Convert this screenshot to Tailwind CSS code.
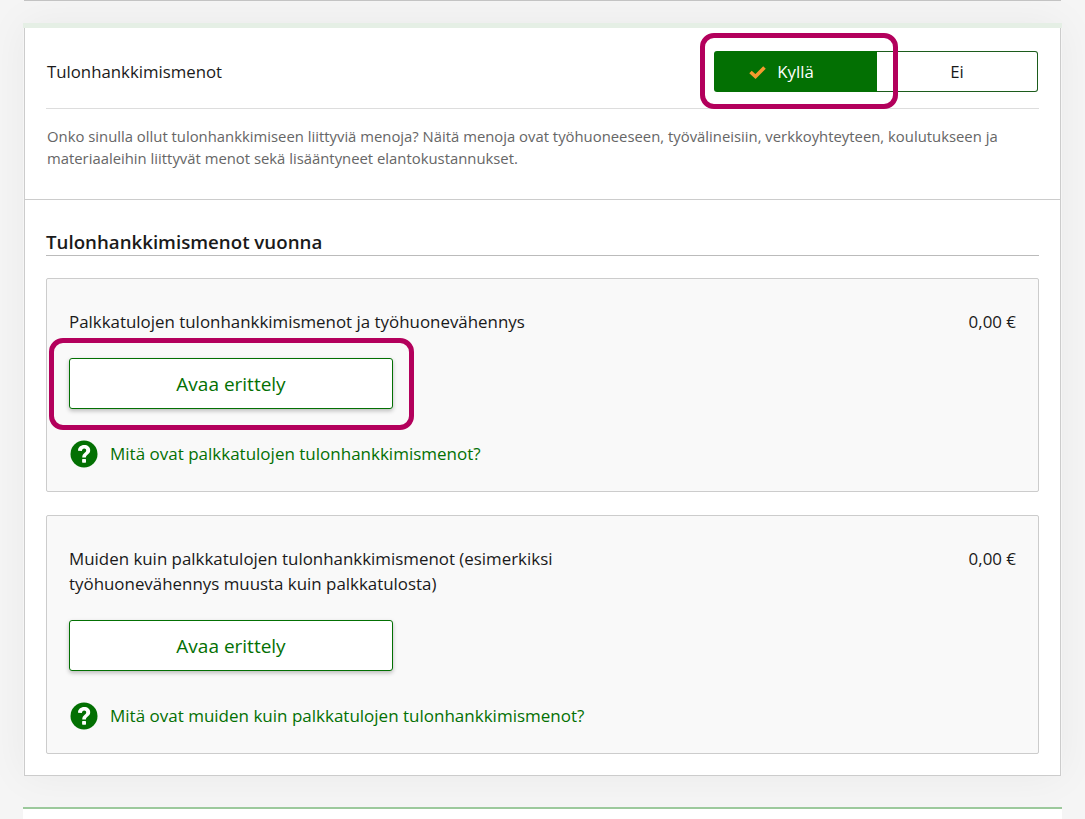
<!DOCTYPE html>
<html lang="fi">
<head>
    <meta charset="UTF-8">
    <title>Tulonhankkimismenot</title>
    <script src="https://cdn.jsdelivr.net/npm/@tailwindcss/browser@4"></script>
</head>
<body class="bg-[#f5f5f5] font-['Open_Sans',sans-serif] text-[#1a1a1a] overflow-hidden">
    <div class="relative h-[819px] w-[1085px] overflow-hidden">
        <div class="mx-[24px] h-px bg-[#c4c4c4]"></div>
        <div class="mx-[24px] h-[22px]"></div>

        <main class="mx-[23px] border-t-[5px] border-[#e5efe5] shadow-[0_0_40px_rgba(0,0,0,0.05)]">
            <div class="mx-px h-[748px] border border-t-0 border-[#cccccc] bg-white px-[21px]">
                <section class="h-[171px]">
                    <div class="flex h-[81px] items-center justify-between border-b border-[#dddddd] pt-[7px]">
                        <h2 class="ml-px text-[16.8px]">Tulonhankkimismenot</h2>
                        <div class="mr-px flex h-[41px] w-[324px] text-[16.8px]">
                            <div class="flex w-[163px] items-center justify-center gap-[11px] rounded-l-[3px] bg-[#037003] pr-[28px] text-white">
                                <svg class="h-[14px] w-[17px]" viewBox="0 0 17 14"><path d="M1.5 7l5 4.5L15.5 2.5" fill="none" stroke="#f59a2f" stroke-width="3.6"/></svg>
                                <span>Kyllä</span>
                            </div>
                            <div class="flex flex-1 items-center justify-center rounded-r-[3px] border border-l-0 border-[#1c5c1c]">Ei</div>
                        </div>
                    </div>
                    <p class="mt-[16px] ml-px text-[14.85px] leading-[22px] text-[#666666]">Onko sinulla ollut tulonhankkimiseen liittyviä menoja? Näitä menoja ovat työhuoneeseen, työvälineisiin, verkkoyhteyteen, koulutukseen ja materiaaleihin liittyvät menot sekä lisääntyneet elantokustannukset.</p>
                </section>
                <div class="-mx-[21px] h-px bg-[#cccccc]"></div>

                <section>
                    <h3 class="mt-[30px] h-[26px] border-b border-[#bbbbbb] text-[18.7px] leading-[24px] font-semibold">Tulonhankkimismenot vuonna</h3>

                    <div class="mt-[22px] h-[214px] rounded-[2px] border border-[#cccccc] bg-[#f9f9f9] px-[22px] pt-[30px]">
                        <div class="flex justify-between text-[16.9px] leading-[25px]">
                            <p>Palkkatulojen tulonhankkimismenot ja työhuonevähennys</p>
                            <span>0,00 €</span>
                        </div>
                        <button class="mt-[24px] flex h-[51px] w-[324px] items-center justify-center rounded-[3px] border border-[#037003] bg-white pt-[2px] text-[19px] text-[#037003] shadow-[0_2px_4px_rgba(0,0,0,0.25)]">Avaa erittely</button>
                        <a class="mt-[31px] flex items-center gap-[12px] text-[17px] leading-[28px] text-[#037003]">
                            <svg class="ml-px h-[28px] w-[28px]" viewBox="0 0 28 28"><circle cx="14" cy="14" r="13.5" fill="#037003"/><path d="M8 10.8C8 7.2 10.6 5 14.2 5c3.500 0 6 2 6 5.200 0 4.200-4.300 4.200-4.300 7.200h-3.700c0-4.600 4-4.600 4-7 0-1.100-.8-1.800-2-1.800-1.300 0-2.200.9-2.300 2.400z" fill="#fff"/><rect x="12.100" y="19" width="3.900" height="3.700" rx=".6" fill="#fff"/></svg>
                            <span>Mitä ovat palkkatulojen tulonhankkimismenot?</span>
                        </a>
                    </div>

                    <div class="mt-[23px] h-[239px] rounded-[2px] border border-[#cccccc] bg-[#f9f9f9] px-[22px] pt-[30px]">
                        <div class="flex justify-between text-[16.9px] leading-[25px]">
                            <p class="w-[520px]">Muiden kuin palkkatulojen tulonhankkimismenot (esimerkiksi työhuonevähennys muusta kuin palkkatulosta)</p>
                            <span>0,00 €</span>
                        </div>
                        <button class="mt-[24px] flex h-[51px] w-[324px] items-center justify-center rounded-[3px] border border-[#037003] bg-white pt-[2px] text-[19px] text-[#037003] shadow-[0_2px_4px_rgba(0,0,0,0.25)]">Avaa erittely</button>
                        <a class="mt-[31px] flex items-center gap-[12px] text-[17px] leading-[28px] text-[#037003]">
                            <svg class="ml-px h-[28px] w-[28px]" viewBox="0 0 28 28"><circle cx="14" cy="14" r="13.5" fill="#037003"/><path d="M8 10.8C8 7.2 10.6 5 14.2 5c3.500 0 6 2 6 5.200 0 4.200-4.300 4.200-4.300 7.200h-3.700c0-4.600 4-4.600 4-7 0-1.100-.8-1.800-2-1.800-1.300 0-2.200.9-2.300 2.400z" fill="#fff"/><rect x="12.100" y="19" width="3.900" height="3.700" rx=".6" fill="#fff"/></svg>
                            <span>Mitä ovat muiden kuin palkkatulojen tulonhankkimismenot?</span>
                        </a>
                    </div>
                </section>
            </div>
        </main>

        <div class="mx-[23px] mt-[31px] h-[30px] border-t-2 border-[#9cc99c] bg-white"></div>

        <!-- annotation frames drawn over the page -->
        <div class="absolute left-[700px] top-[33px] h-[76px] w-[198px] rounded-[14px] border-[5px] border-[#b3005c]"></div>
        <div class="absolute left-[49px] top-[338px] h-[92px] w-[365px] rounded-[14px] border-[5px] border-[#b3005c]"></div>
    </div>
</body>
</html>
